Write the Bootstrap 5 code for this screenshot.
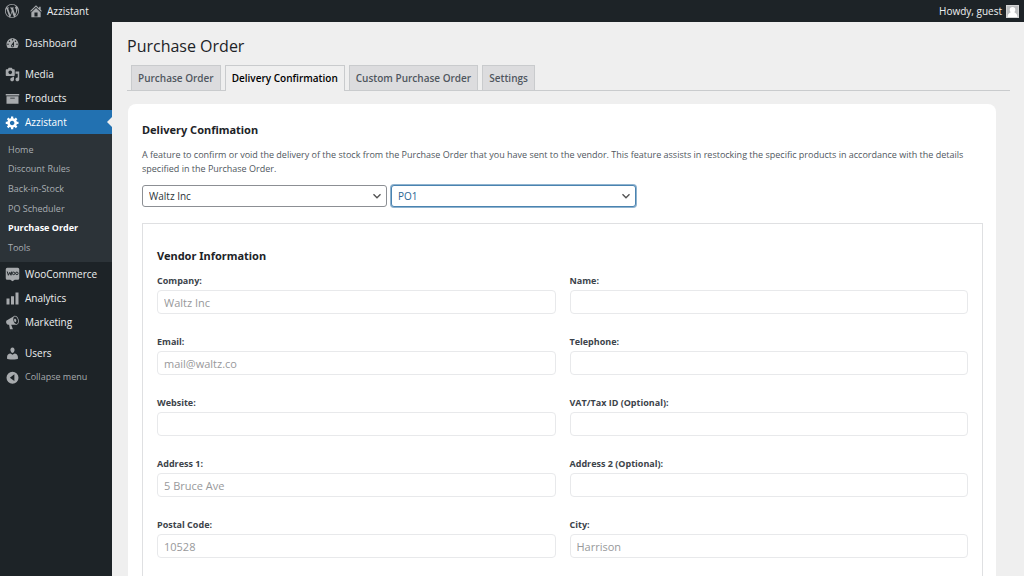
<!DOCTYPE html>
<html lang="en">
<head>
<meta charset="utf-8">
<meta name="viewport" content="width=device-width, initial-scale=1">
<title>Purchase Order</title>
<link href="https://cdn.jsdelivr.net/npm/bootstrap@5.3.0/dist/css/bootstrap.min.css" rel="stylesheet">
<style>
  :root { --ink: #1d2327; --sub: #2c3338; --accent: #2271b1; }
  body { font-family: "Open Sans", "Noto Sans", sans-serif; font-size: 9px; line-height: 14px; color: #50575e; background: #efefef; }
  a { text-decoration: none; }
  svg { display: block; flex: none; fill: currentColor; }
  .adminbar { height: 22px; background: var(--ink); font-size: 10px; padding: 0 5px; }
  .adminbar a { color: #eef0f1; }
  .adminbar svg { color: #a7aaad; }
  .site-link { gap: 4px; margin-left: 10px; }
  .adminbar .avatar { background: #d2d3d4; color: #fff; }
  .side { width: 112px; background: var(--ink); padding-top: 9px; }
  .side-link { height: 24px; padding: 0 0 0 5px; gap: 5px; color: #eef0f1; font-size: 10px; }
  .side-link svg { color: #a7aaad; }
  .side-link.current { background: var(--accent); color: #fff; position: relative; }
  .side-link.current svg { color: #fff; }
  .side-link.current::after { content: ""; position: absolute; right: 0; top: 7px; border: 5px solid transparent; border-right-color: #efefef; border-left-width: 0; }
  .side-gap { margin-top: 7px; }
  .side-link.collapse-link { color: #a7aaad; font-size: 9px; }
  .submenu { display: grid; grid-auto-rows: 1fr; height: 128px; padding: 6px 8px 4px; background: var(--sub); }
  .submenu a { color: #a9aeb3; font-size: 9px; }
  .submenu a.current { color: #fff; font-weight: 700; }
  .page { padding: 12px 14px 0 15px; }
  .page h1 { font-size: 16px; line-height: 24px; font-weight: 400; color: #1d2327; margin: 0 0 7px; }
  .tabs { border-bottom: 1px solid #c9cbcd; padding-left: 4px; gap: 4px; }
  .tabs a { border: 1px solid #c9cbcd; border-bottom: 0; background: #dcdcde; color: #50575e; font-size: 10px; line-height: 24px; font-weight: 600; padding: 0 6px; }
  .tabs a.active { background: #efefef; color: #000; margin-bottom: -1px; padding-bottom: 1px; }
  .panel { background: #fff; border-radius: 8px; margin: 13px 14px 0 1px; padding: 18px 13px 14px 14px; }
  .panel h2 { font-family: "Noto Sans", "Open Sans", sans-serif; font-size: 11px; line-height: 16px; font-weight: 700; color: #1d2327; margin: 0; }
  .intro { margin: 10px 0 9px; }
  .pick { width: 245px; height: 22px; border: 1px solid #8c8f94; border-radius: 3px; padding: 0 24px 0 6px; font-size: 10px; line-height: 18px; color: #2c3338; background-position: right 4px center; background-size: 10px 10px;
    background-image: url("data:image/svg+xml,%3Csvg xmlns='http://www.w3.org/2000/svg' viewBox='0 0 10 10'%3E%3Cpath d='M1.5 3.2 5 6.7l3.5-3.5' fill='none' stroke='%23555' stroke-width='1.4'/%3E%3C/svg%3E"); }
  .pick.chosen { border-color: #4a83b0; box-shadow: 0 0 0 1px #8fb3cf; color: #2a6592; }
  .vendor { border: 1px solid #dfe0e2; margin-top: 16px; padding: 24px 14px 40px; }
  .fields { --bs-gutter-x: 14px; margin-top: 9px; row-gap: 20px; }
  .fields label { display: block; font-weight: 700; line-height: 16px; margin-bottom: 1px; color: #3c434a; }
  .fields input { height: 24px; border: 1px solid #e8e9eb; border-radius: 4px; padding: 0 6px; font-size: 11px; line-height: 22px; }
  .fields input::placeholder { color: #98999b; }
</style>
</head>
<body>
<div class="vh-100 d-flex flex-column overflow-hidden">
  <header class="adminbar flex-shrink-0 d-flex align-items-center justify-content-between">
    <div class="d-flex align-items-center">
      <a href="#" aria-label="WordPress"><svg width="14" height="14" viewBox="0 0 20 20"><path d="M20 10c0-5.51-4.49-10-10-10C4.48 0 0 4.49 0 10c0 5.52 4.48 10 10 10 5.51 0 10-4.48 10-10zM7.78 15.37L4.37 6.22c.55-.02 1.17-.08 1.17-.08.5-.06.44-1.13-.06-1.11 0 0-1.45.11-2.37.11-.18 0-.37 0-.58-.01C4.12 2.69 6.87 1.11 10 1.11c2.33 0 4.45.87 6.05 2.34-.68-.11-1.65.39-1.65 1.58 0 .74.45 1.36.9 2.1.35.61.55 1.36.55 2.46 0 1.49-1.4 5-1.4 5l-3.03-8.37c.54-.02.82-.17.82-.17.5-.05.44-1.25-.06-1.22 0 0-1.44.12-2.38.12-.87 0-2.33-.12-2.33-.12-.5-.03-.56 1.2-.06 1.22l.92.08 1.26 3.41zM17.41 10c.24-.64.74-1.87.43-4.25.7 1.29 1.05 2.71 1.05 4.25 0 3.29-1.73 6.24-4.4 7.78.97-2.59 1.94-5.2 2.92-7.78zM6.1 18.09C3.12 16.65 1.11 13.53 1.11 10c0-1.3.23-2.48.72-3.59C3.25 10.3 4.67 14.2 6.1 18.09zm4.03-6.63l2.58 6.98c-.86.29-1.76.45-2.71.45-.79 0-1.57-.11-2.29-.33.81-2.38 1.62-4.74 2.42-7.1z"/></svg></a>
      <a href="#" class="site-link d-flex align-items-center"><svg width="14" height="14" viewBox="1 1 18 18"><path fill-rule="evenodd" d="M16 8.5l1.53 1.53-1.06 1.06L10 4.6l-6.47 6.49-1.06-1.06L10 2.5l4 4v-2h2v4zm-6-2.46l6 5.99V18H4v-5.97zM12 17v-5H8v5h4z"/></svg>Azzistant</a>
    </div>
    <a href="#" class="d-flex align-items-center gap-1">Howdy, guest<svg class="avatar" width="13" height="13" viewBox="0 0 13 13"><path d="M1 1h11v11H1z" fill="#bcbec0"/><circle cx="6.500" cy="4.800" r="2.800"/><path d="M1.500 12c0-3 2-4 3.500-5h3c1.500 1 3.500 2 3.500 5z"/></svg></a>
  </header>

  <div class="d-flex flex-grow-1 overflow-hidden">
    <nav class="side flex-shrink-0" aria-label="Main menu">
      <a href="#" class="side-link d-flex align-items-center"><svg width="15" height="15" viewBox="0 0 20 20"><path fill-rule="evenodd" d="M3.76 16h12.480c1.100-1.370 1.760-3.110 1.760-5 0-4.420-3.580-8-8-8s-8 3.580-8 8c0 1.890.660 3.630 1.760 5zM10 4c.55 0 1 .45 1 1s-.45 1-1 1-1-.45-1-1 .45-1 1-1zM6 6c.55 0 1 .45 1 1s-.45 1-1 1-1-.45-1-1 .45-1 1-1zm8 0c.55 0 1 .45 1 1s-.45 1-1 1-1-.45-1-1 .45-1 1-1zm-5.370 5.550L12 7v6c0 1.100-.9 2-2 2s-2-.9-2-2c0-.57.24-1.080.63-1.450zM4 10c.55 0 1 .45 1 1s-.45 1-1 1-1-.45-1-1 .45-1 1-1zm12 0c.55 0 1 .45 1 1s-.45 1-1 1-1-.45-1-1 .45-1 1-1zm-5 3c0-.55-.45-1-1-1s-1 .45-1 1 .45 1 1 1 1-.45 1-1z"/></svg>Dashboard</a>
      <a href="#" class="side-link side-gap d-flex align-items-center"><svg width="15" height="15" viewBox="0 0 20 20"><path fill-rule="evenodd" d="M13 11V4c0-.55-.45-1-1-1h-1.670L9 1H5L3.670 3H2c-.55 0-1 .45-1 1v7c0 .55.45 1 1 1h10c.55 0 1-.45 1-1zM7 4.500c1.380 0 2.500 1.120 2.500 2.500S8.380 9.500 7 9.500 4.500 8.380 4.500 7 5.620 4.500 7 4.500zM14 6h5v10.500c0 1.380-1.120 2.500-2.500 2.500S14 17.880 14 16.500s1.120-2.500 2.500-2.500c.17 0 .34.02.5.05V9h-3V6zm-4 8.050V13h2v3.500c0 1.380-1.120 2.500-2.500 2.500S7 17.880 7 16.500 8.120 14 9.500 14c.17 0 .34.02.5.05z"/></svg>Media</a>
      <a href="#" class="side-link d-flex align-items-center"><svg width="15" height="15" viewBox="0 0 20 20"><path fill-rule="evenodd" d="M19 4v2H1V4h18zM2 7h16v10H2V7zm11 3V9H7v1h6z"/></svg>Products</a>
      <a href="#" class="side-link current d-flex align-items-center"><svg width="15" height="15" viewBox="0 0 20 20"><path fill-rule="evenodd" d="M18 12h-2.180c-.17.7-.44 1.350-.81 1.930l1.540 1.540-2.100 2.100-1.540-1.540c-.58.36-1.230.63-1.910.79V19H8v-2.180c-.68-.16-1.330-.43-1.910-.79l-1.540 1.540-2.120-2.120 1.540-1.540c-.36-.58-.63-1.230-.79-1.910H1V9.030h2.170c.16-.7.44-1.350.8-1.940L2.430 5.550l2.100-2.100 1.540 1.540c.58-.37 1.240-.64 1.930-.81V2h3v2.180c.68.16 1.330.43 1.910.79l1.540-1.540 2.120 2.120-1.540 1.540c.36.59.64 1.240.8 1.940H18V12zm-8.500 1.500c1.660 0 3-1.340 3-3s-1.340-3-3-3-3 1.340-3 3 1.340 3 3 3z"/></svg>Azzistant</a>
      <div class="submenu align-items-center">
        <a href="#">Home</a>
        <a href="#">Discount Rules</a>
        <a href="#">Back-in-Stock</a>
        <a href="#">PO Scheduler</a>
        <a href="#" class="current">Purchase Order</a>
        <a href="#">Tools</a>
      </div>
      <a href="#" class="side-link d-flex align-items-center"><svg width="15" height="15" viewBox="0 0 20 20"><path d="M3 1h14q2 0 2 2v12q0 2-2 2h-4l-3 2-3-2H3q-2 0-2-2V3q0-2 2-2z"/><path d="M3 6l1.500 5L6.500 7l1.500 4 1-5" fill="none" stroke="#1d2327" stroke-width="1.300"/><circle cx="11.500" cy="8.500" r="1.700" fill="none" stroke="#1d2327" stroke-width="1.300"/><circle cx="15.800" cy="8.500" r="1.700" fill="none" stroke="#1d2327" stroke-width="1.300"/></svg>WooCommerce</a>
      <a href="#" class="side-link d-flex align-items-center"><svg width="15" height="15" viewBox="0 0 20 20"><path d="M18 18V2h-4v16h4zm-6 0V7H8v11h4zm-6 0v-8H2v8h4z"/></svg>Analytics</a>
      <a href="#" class="side-link d-flex align-items-center"><svg width="15" height="15" viewBox="0 0 20 20"><path fill-rule="evenodd" d="M18.150 5.940c.46 1.620.38 3.220-.02 4.480-.42 1.280-1.260 2.180-2.300 2.480-.16.06-.26.06-.4.06-.06.02-.12.02-.18.02-.06.02-.14.02-.22.02h-6.800l2.220 5.500c.02.14-.06.26-.14.34-.08.1-.24.16-.34.16H6.950c-.1 0-.26-.06-.34-.16-.08-.08-.16-.2-.14-.34l-1-5.500H4.250l-.02-.02c-.5.06-1.080-.18-1.540-.62s-.88-1.080-1.060-1.880c-.24-.8-.2-1.560-.02-2.200.18-.62.58-1.080 1.060-1.300l.02-.02 9-5.400c.1-.06.18-.1.24-.16.06-.04.14-.08.24-.12.16-.08.28-.12.5-.18 1.040-.3 2.240.1 3.220.98s1.840 2.240 2.260 3.860zm-2.580 5.980h-.02c.4-.1.74-.34 1.040-.7.58-.7.86-1.760.86-3.040 0-.64-.1-1.300-.28-1.980-.34-1.360-1.020-2.500-1.780-3.240s-1.680-1.100-2.460-.88c-.82.22-1.400.96-1.700 2-.32 1.040-.28 2.360.06 3.720.38 1.360 1 2.500 1.800 3.240.78.74 1.620 1.100 2.480.88zm-2.540-7.080c.22-.04.42-.02.62.04.38.16.76.48 1.020 1s.42 1.200.42 1.780c0 .3-.04.56-.12.8-.18.48-.44.84-.86.94-.34.1-.8-.06-1.140-.4s-.64-.86-.78-1.500c-.18-.62-.12-1.240.02-1.720s.48-.84.82-.94z"/></svg>Marketing</a>
      <a href="#" class="side-link side-gap d-flex align-items-center"><svg width="15" height="15" viewBox="0 0 20 20"><path d="M10 9.250c-2.270 0-2.730-3.440-2.730-3.440C7 4.020 7.820 2 9.970 2c2.160 0 2.980 2.020 2.710 3.810 0 0-.41 3.440-2.680 3.440zm0 2.570L12.720 10c2.390 0 4.520 2.330 4.520 4.530v2.490s-3.650 1.130-7.240 1.130c-3.650 0-7.240-1.130-7.240-1.130v-2.490c0-2.250 1.940-4.480 4.470-4.480z"/></svg>Users</a>
      <button type="button" class="side-link collapse-link w-100 border-0 bg-transparent d-flex align-items-center"><svg width="15" height="15" viewBox="0 0 20 20"><path fill-rule="evenodd" d="M10 2.200a8 8 0 1 0 0 16 8 8 0 0 0 0-16zM12.500 5.700v9L6.500 10.200z"/></svg>Collapse menu</button>
    </nav>

    <main class="page flex-grow-1">
      <h1>Purchase Order</h1>
      <nav class="tabs d-flex" aria-label="Sections">
        <a href="#">Purchase Order</a>
        <a href="#" class="active" aria-current="page">Delivery Confirmation</a>
        <a href="#">Custom Purchase Order</a>
        <a href="#">Settings</a>
      </nav>
      <section class="panel">
        <h2>Delivery Confimation</h2>
        <p class="intro">A feature to confirm or void the delivery of the stock from the Purchase Order that you have sent to the vendor. This feature assists in restocking the specific products in accordance with the details specified in the Purchase Order.</p>
        <div class="d-flex gap-1">
          <select class="form-select pick" aria-label="Vendor"><option>Waltz Inc</option></select>
          <select class="form-select pick chosen" aria-label="Purchase order"><option>PO1</option></select>
        </div>
        <form class="vendor">
          <h2>Vendor Information</h2>
          <div class="row fields">
            <div class="col-6"><label for="company">Company:</label><input class="form-control" id="company" placeholder="Waltz Inc"></div>
            <div class="col-6"><label for="name">Name:</label><input class="form-control" id="name"></div>
            <div class="col-6"><label for="email">Email:</label><input class="form-control" id="email" type="email" placeholder="mail@waltz.co"></div>
            <div class="col-6"><label for="phone">Telephone:</label><input class="form-control" id="phone" type="tel"></div>
            <div class="col-6"><label for="site">Website:</label><input class="form-control" id="site"></div>
            <div class="col-6"><label for="vat">VAT/Tax ID (Optional):</label><input class="form-control" id="vat"></div>
            <div class="col-6"><label for="addr1">Address 1:</label><input class="form-control" id="addr1" placeholder="5 Bruce Ave"></div>
            <div class="col-6"><label for="addr2">Address 2 (Optional):</label><input class="form-control" id="addr2"></div>
            <div class="col-6"><label for="postal">Postal Code:</label><input class="form-control" id="postal" placeholder="10528"></div>
            <div class="col-6"><label for="city">City:</label><input class="form-control" id="city" placeholder="Harrison"></div>
          </div>
        </form>
      </section>
    </main>
  </div>
</div>
<script src="https://cdn.jsdelivr.net/npm/bootstrap@5.3.0/dist/js/bootstrap.bundle.min.js"></script>
</body>
</html>
